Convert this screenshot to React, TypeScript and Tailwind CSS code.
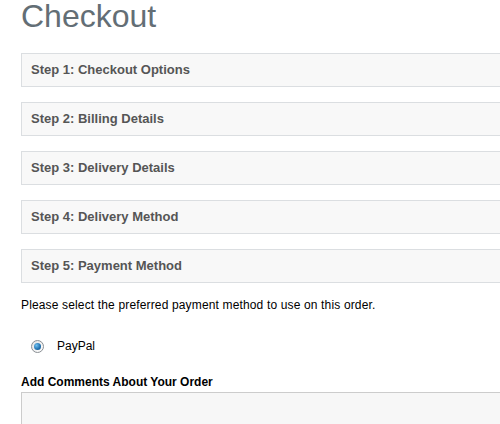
import React from "react";

const steps = [
  "Step 1: Checkout Options",
  "Step 2: Billing Details",
  "Step 3: Delivery Details",
  "Step 4: Delivery Method",
  "Step 5: Payment Method",
];

export default function App() {
  return (
    <div className="w-[500px] h-[424px] overflow-hidden bg-white text-[12px] text-black" style={{ fontFamily: '"Liberation Sans", Arial, sans-serif' }}>
      <div className="w-[960px] pl-[21px]">
        <h1 className="text-[32px] leading-[32px] font-normal text-[#636e75] mb-[21px]">Checkout</h1>
        {steps.map((s) => (
          <div key={s} className="border border-[#dbdee1] bg-[#f8f8f8] px-[9px] py-[8px] text-[13px] leading-[16px] font-bold text-[#555555] mb-[15px]">
            {s}
          </div>
        ))}
        <p className="leading-[14px] tracking-[0.15px]">Please select the preferred payment method to use on this order.</p>
        <div className="flex items-center mt-[27px] h-[14px]">
          <span className="ml-[10px] w-[13px] h-[13px] rounded-full border border-[#8a8f94] bg-gradient-to-br from-[#e4e4e4] to-[#ffffff] flex items-center justify-center">
            <span className="w-[7px] h-[7px] rounded-full bg-[radial-gradient(circle_at_35%_35%,#6fc0f0,#1f6fae_60%,#12507f)]" />
          </span>
          <span className="ml-[13px] leading-[14px]">PayPal</span>
        </div>
        <div className="mt-[22px] font-bold leading-[14px]">Add Comments About Your Order</div>
        <div className="mt-[3px] h-[120px] border border-[#cccccc] bg-[#f7f7f7]" />
      </div>
    </div>
  );
}
